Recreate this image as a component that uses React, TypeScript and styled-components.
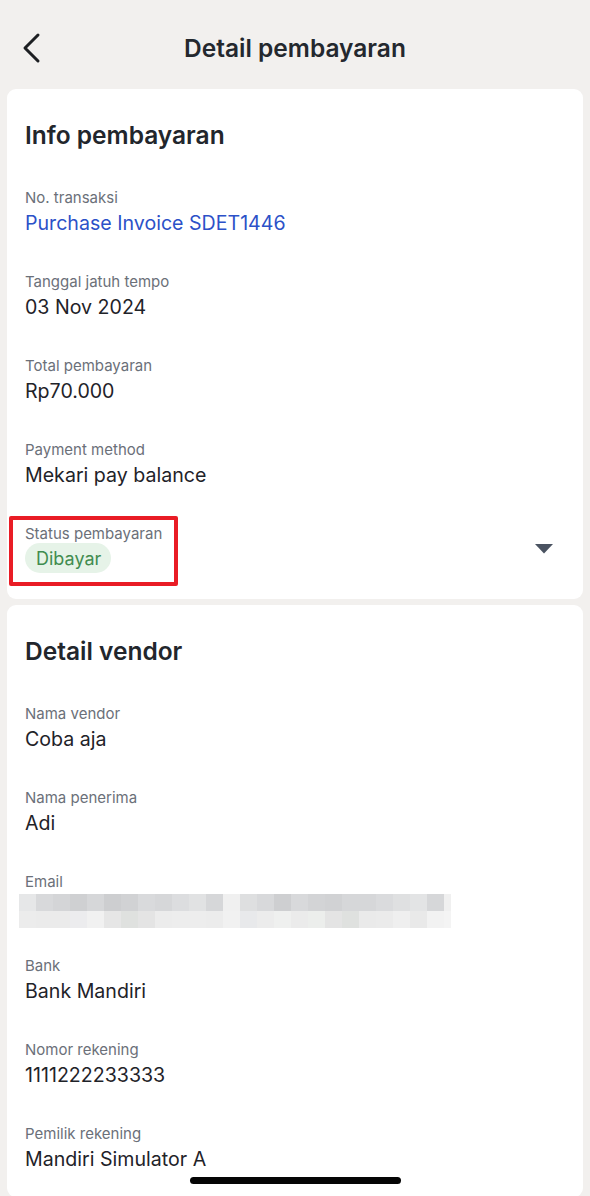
import styled, { createGlobalStyle } from "styled-components";

const GlobalStyle = createGlobalStyle`
  html, body {
    margin: 0;
    padding: 0;
    background: #f2f0ee;
  }
  body {
    font-family: Inter, "Noto Sans", "Liberation Sans", sans-serif;
    color: #1f2329;
    -webkit-font-smoothing: antialiased;
  }
`;

const Page = styled.div`
  width: 590px;
  height: 1196px;
  overflow: hidden;
  position: relative;
  background: #f2f0ee;
  display: flex;
  flex-direction: column;
`;

const TopBar = styled.header`
  height: 89px;
  flex-shrink: 0;
  display: grid;
  grid-template-columns: 60px 1fr 60px;
  align-items: center;
  padding-top: 7px;
  box-sizing: border-box;
`;

const BackButton = styled.button`
  border: 0;
  background: none;
  padding: 0 0 0 20px;
  display: flex;
  align-items: center;
  cursor: pointer;
`;

const TopTitle = styled.h1`
  margin: 0;
  text-align: center;
  font-size: 24.5px;
  font-weight: 600;
  color: #24282e;
`;

const Cards = styled.div`
  display: flex;
  flex-direction: column;
  gap: 6px;
  padding: 0 7px;
`;

const Card = styled.section`
  background: #fff;
  border-radius: 9px;
  padding: 30px 24px 26px 18px;
`;

const CardTitle = styled.h2`
  margin: 0 0 37px;
  font-size: 24.5px;
  line-height: 32px;
  font-weight: 600;
  color: #22262c;
`;

const Fields = styled.div`
  display: flex;
  flex-direction: column;
  gap: 37px;
`;

const Field = styled.div`
  position: relative;
`;

const Label = styled.div`
  font-size: 15px;
  line-height: 20px;
  color: #6b7079;
`;

const Value = styled.div<{ $link?: boolean }>`
  margin-top: 3px;
  font-size: 19.6px;
  line-height: 24px;
  color: ${(p) => (p.$link ? "#2c51c8" : "#1f2329")};
`;

const StatusRow = styled.div`
  display: flex;
  align-items: center;
  justify-content: space-between;
`;

const Chip = styled.span`
  display: inline-flex;
  align-items: center;
  height: 30px;
  margin-top: -1px;
  padding: 0 10px 0 11px;
  border-radius: 15px;
  background: #e6f3e8;
  color: #418c4f;
  font-size: 18px;
`;

const Highlight = styled.div`
  position: absolute;
  left: -16px;
  top: -8px;
  width: 169px;
  height: 70px;
  border: 4px solid #e91c25;
  border-radius: 2px;
  box-sizing: border-box;
  pointer-events: none;
`;

const Caret = styled.svg`
  margin-right: 6px;
`;

const Blur = styled.div`
  margin: 2px 0 -9px -6px;
  display: grid;
  grid-template-columns: repeat(26, 17px);
  grid-auto-rows: 17px;
  width: 432px;
  overflow: hidden;
`;

const Pixel = styled.div<{ $c: string }>`
  background: ${(p) => p.$c};
`;

const HomeBar = styled.div`
  position: absolute;
  left: 190px;
  bottom: 12px;
  width: 211px;
  height: 7px;
  border-radius: 4px;
  background: #050505;
`;

const topRow = [
  "#e6e7e8", "#d8d9db", "#d4d5d7", "#cfd0d2", "#d6d7d9", "#cdced0", "#d1d2d4", "#d9dadc",
  "#d6d7d9", "#dcdddf", "#e1e2e3", "#d6d7d9", "#f0f0f0", "#dedfe0", "#d8d9db", "#cecfd1",
  "#d8d9db", "#d3d4d6", "#d1d2d4", "#d6d7d9", "#d6d7d9", "#dadbdd", "#dfe0e1", "#e3e4e5",
  "#d6d7d9", "#f0f0f0",
];
const bottomRow = [
  "#ececec", "#ebebeb", "#ebebeb", "#ececee", "#f1f1f1", "#e6e6e6", "#dfe1df", "#e4e4e4",
  "#ececec", "#ededed", "#ededed", "#ececec", "#f1f1f1", "#e8e9eb", "#ececec", "#eff0ef",
  "#ebebeb", "#eceeec", "#e4e4e4", "#dfe1df", "#eaeaea", "#ebebeb", "#efefef", "#e9e9e9",
  "#f2f2f2", "#f4f4f4",
];

const payment = [
  { label: "No. transaksi", value: "Purchase Invoice SDET1446", link: true },
  { label: "Tanggal jatuh tempo", value: "03 Nov 2024" },
  { label: "Total pembayaran", value: "Rp70.000" },
  { label: "Payment method", value: "Mekari pay balance" },
];

const vendorTop = [
  { label: "Nama vendor", value: "Coba aja" },
  { label: "Nama penerima", value: "Adi" },
];

const vendorBottom = [
  { label: "Bank", value: "Bank Mandiri" },
  { label: "Nomor rekening", value: "1111222233333" },
  { label: "Pemilik rekening", value: "Mandiri Simulator A" },
];

function InfoField({ label, value, link }: { label: string; value: string; link?: boolean }) {
  return (
    <Field>
      <Label>{label}</Label>
      <Value $link={link}>{value}</Value>
    </Field>
  );
}

export default function App() {
  return (
    <Page>
      <GlobalStyle />
      <TopBar>
        <BackButton aria-label="Kembali">
          <svg width="24" height="32" viewBox="0 0 24 32">
            <path d="M18 3 L5 16 L18 29" fill="none" stroke="#1d1f22" strokeWidth="3" strokeLinecap="round" strokeLinejoin="round" />
          </svg>
        </BackButton>
        <TopTitle>Detail pembayaran</TopTitle>
        <span />
      </TopBar>

      <Cards>
        <Card>
          <CardTitle>Info pembayaran</CardTitle>
          <Fields>
            {payment.map((f) => (
              <InfoField key={f.label} {...f} />
            ))}
            <Field>
              <StatusRow>
                <div>
                  <Label>Status pembayaran</Label>
                  <Chip>Dibayar</Chip>
                </div>
                <Caret width="18" height="10" viewBox="0 0 18 10">
                  <path d="M0 0 H18 L9 9.5 Z" fill="#4a5361" />
                </Caret>
              </StatusRow>
              <Highlight />
            </Field>
          </Fields>
        </Card>

        <Card>
          <CardTitle>Detail vendor</CardTitle>
          <Fields>
            {vendorTop.map((f) => (
              <InfoField key={f.label} {...f} />
            ))}
            <Field>
              <Label>Email</Label>
              <Blur>
                {topRow.concat(bottomRow).map((c, i) => (
                  <Pixel key={i} $c={c} />
                ))}
              </Blur>
            </Field>
            {vendorBottom.map((f) => (
              <InfoField key={f.label} {...f} />
            ))}
          </Fields>
        </Card>
      </Cards>
      <HomeBar />
    </Page>
  );
}
